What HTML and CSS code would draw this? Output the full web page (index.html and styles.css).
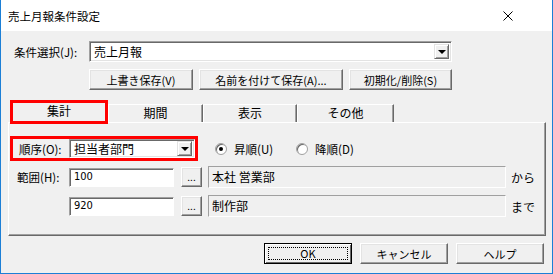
FILE: index.html
```html
<!DOCTYPE html>
<html lang="ja">

<head>
    <meta charset="UTF-8">
    <title>売上月報条件設定</title>
    <link rel="stylesheet" href="styles.css">
</head>

<body>
    <div class="window">
        <div class="titlebar">
            <span class="title">売上月報条件設定</span>
            <svg class="close" width="10" height="10" viewBox="0 0 10 10">
                <path d="M0.5 0.5 L9.5 9.5 M9.5 0.5 L0.5 9.5" stroke="#000" stroke-width="1" fill="none"/>
            </svg>
        </div>

        <div class="dialog">
            <div class="row-cond">
                <label class="lbl-cond">条件選択(J):</label>
                <div class="combo combo-cond">
                    <span class="combo-text">売上月報</span>
                    <span class="drop"><span class="tri"></span></span>
                </div>
            </div>

            <div class="row-save">
                <button class="btn save1">上書き保存(V)</button>
                <button class="btn save2">名前を付けて保存(A)...</button>
                <button class="btn save3">初期化/削除(S)</button>
            </div>

            <div class="tabs">
                <div class="tab selected">集計</div>
                <div class="tab t2">期間</div>
                <div class="tab t3">表示</div>
                <div class="tab t4">その他</div>
            </div>

            <div class="panel">
                <div class="row-order">
                    <div class="marked">
                        <label class="lbl-order">順序(O):</label>
                        <div class="combo combo-order">
                            <span class="combo-text">担当者部門</span>
                            <span class="drop"><span class="tri"></span></span>
                        </div>
                    </div>
                    <div class="radio r1"><span class="dot checked"></span>昇順(U)</div>
                    <div class="radio r2"><span class="dot"></span>降順(D)</div>
                </div>

                <div class="range-row first">
                    <label class="lbl-range">範囲(H):</label>
                    <div class="field">100</div>
                    <button class="btn dots">...</button>
                    <div class="show">本社 営業部</div>
                    <span class="suffix">から</span>
                </div>
                <div class="range-row second">
                    <label class="lbl-range"></label>
                    <div class="field">920</div>
                    <button class="btn dots">...</button>
                    <div class="show">制作部</div>
                    <span class="suffix">まで</span>
                </div>
            </div>

            <div class="footer">
                <button class="btn foot default"><span class="focus">OK</span></button>
                <button class="btn foot">キャンセル</button>
                <button class="btn foot">ヘルプ</button>
            </div>
        </div>
    </div>
</body>

</html>
```

FILE: styles.css
```css
* {
    box-sizing: border-box;
}

body {
    margin: 0;
    padding: 0;
    font-family: "Noto Sans CJK JP", "Noto Sans", sans-serif;
    font-size: 11.5px;
    color: #000;
    background-color: #fff;
}

.window {
    width: 553px;
    height: 274px;
    border: 1px solid #1c7fd6;
    border-top: none;
    display: flex;
    flex-direction: column;
}

.titlebar {
    height: 31px;
    background-color: #fff;
    display: flex;
    align-items: center;
    justify-content: space-between;
    padding: 0 39px 0 7px;
}

.title {
    font-size: 11.5px;
    line-height: 14px;
}

.dialog {
    flex: 1;
    background-color: #f0f0f0;
    padding-top: 10px;
}

/* top rows */
.row-cond {
    display: flex;
    align-items: center;
    height: 21px;
    padding-left: 13px;
}

.lbl-cond {
    width: 75px;
}

.combo {
    position: relative;
    background-color: #fff;
    border: 1px solid;
    border-color: #a0a0a0 #fff #fff #a0a0a0;
    box-shadow: inset 1px 1px 0 #696969, inset -1px -1px 0 #e3e3e3;
    display: flex;
    align-items: center;
    padding-left: 4px;
    line-height: 14px;
}

.combo-cond {
    width: 363px;
    height: 21px;
    font-size: 12px;
}

.drop {
    position: absolute;
    right: 2px;
    top: 2px;
    bottom: 2px;
    width: 15px;
    background-color: #f0f0f0;
    border: 1px solid;
    border-color: #e3e3e3 #696969 #696969 #e3e3e3;
    box-shadow: inset 1px 1px 0 #fff, inset -1px -1px 0 #a0a0a0;
    display: flex;
    align-items: center;
    justify-content: center;
}

.tri {
    width: 0;
    height: 0;
    border-left: 4px solid transparent;
    border-right: 4px solid transparent;
    border-top: 4px solid #000;
}

.btn {
    font-family: "Noto Sans CJK JP", "Noto Sans", sans-serif;
    font-size: 11px;
    line-height: 14px;
    color: #000;
    background-color: #f0f0f0;
    border: 1px solid;
    border-color: #fff #696969 #696969 #fff;
    box-shadow: inset -1px -1px 0 #a0a0a0, inset 1px 1px 0 #e3e3e3;
    padding: 0;
    margin: 0;
    height: 21px;
}

.row-save {
    display: flex;
    gap: 6px;
    margin-top: 7px;
    padding-left: 88px;
}

.save1 {
    width: 104px;
}

.save2 {
    width: 144px;
}

.save3 {
    width: 103px;
}

/* tabs */
.tabs {
    display: flex;
    height: 22px;
    margin-top: 10px;
    padding-left: 9px;
}

.tab {
    height: 18px;
    margin-top: 4px;
    text-align: center;
    line-height: 16px;
    font-size: 12px;
    border-top: 1px solid #fff;
    border-left: 1px solid #fff;
    border-right: 1px solid #696969;
    box-shadow: inset -1px 0 0 #a0a0a0;
}

.tab.selected {
    position: relative;
    z-index: 1;
    width: 98px;
    height: 24px;
    margin-top: 0;
    border: 3px solid #f00;
    box-shadow: none;
    background-color: #f0f0f0;
    line-height: 16px;
}

.t2 {
    width: 95px;
}

.t3 {
    width: 94px;
}

.t4 {
    width: 97px;
}

.panel {
    margin-left: 7px;
    width: 538px;
    height: 114px;
    border: 1px solid;
    border-color: #fff #696969 #696969 #fff;
    box-shadow: inset -1px -1px 0 #a0a0a0;
}

.row-order {
    display: flex;
    align-items: center;
    margin-top: 13px;
    margin-left: 1px;
}

.marked {
    display: flex;
    align-items: center;
    width: 188px;
    height: 25px;
    border: 3px solid #f00;
    padding-left: 6px;
}

.lbl-order {
    width: 50px;
}

.combo-order {
    width: 126px;
    height: 19px;
    font-size: 12px;
}

.combo-order .drop {
    top: 1px;
    bottom: 1px;
}

.radio {
    display: flex;
    align-items: center;
    gap: 7px;
}

.r1 {
    margin-left: 17px;
}

.r2 {
    margin-left: 23px;
}

.dot {
    width: 12px;
    height: 12px;
    border-radius: 50%;
    background-color: #fff;
    border: 1px solid #a0a0a0;
    box-shadow: inset 1px 1px 0 #696969;
    display: flex;
    align-items: center;
    justify-content: center;
}

.dot.checked::after {
    content: "";
    width: 4px;
    height: 4px;
    border-radius: 50%;
    background-color: #000;
}

/* range rows */
.range-row {
    display: flex;
    align-items: center;
    height: 22px;
}

.range-row.first {
    margin-top: 5px;
}

.range-row.second {
    margin-top: 7px;
}

.lbl-range {
    width: 60px;
    padding-left: 8px;
}

.field {
    width: 105px;
    height: 19px;
    background-color: #fff;
    border: 1px solid;
    border-color: #a0a0a0 #fff #fff #a0a0a0;
    box-shadow: inset 1px 1px 0 #696969;
    padding-left: 4px;
    line-height: 16px;
    font-family: "DejaVu Sans Condensed", "Liberation Sans", sans-serif;
    font-size: 11px;
}

.dots {
    width: 21px;
    height: 20px;
    margin-left: 7px;
    font-size: 10px;
    line-height: 10px;
}

.show {
    width: 298px;
    height: 22px;
    margin-left: 6px;
    border: 1px solid;
    border-color: #a0a0a0 #fff #fff #a0a0a0;
    padding-left: 3px;
    line-height: 19px;
    font-size: 12px;
}

.suffix {
    margin-left: 5px;
    font-size: 12px;
}

/* footer buttons */
.footer {
    display: flex;
    gap: 8px;
    margin-top: 7px;
    padding-left: 263px;
}

.foot {
    width: 88px;
}

.default {
    border: 1px solid #000;
    box-shadow: inset 1px 1px 0 #fff, inset -1px -1px 0 #696969;
    padding: 3px;
}

.focus {
    display: block;
    height: 13px;
    line-height: 11px;
    border: 1px dotted #000;
}
```
